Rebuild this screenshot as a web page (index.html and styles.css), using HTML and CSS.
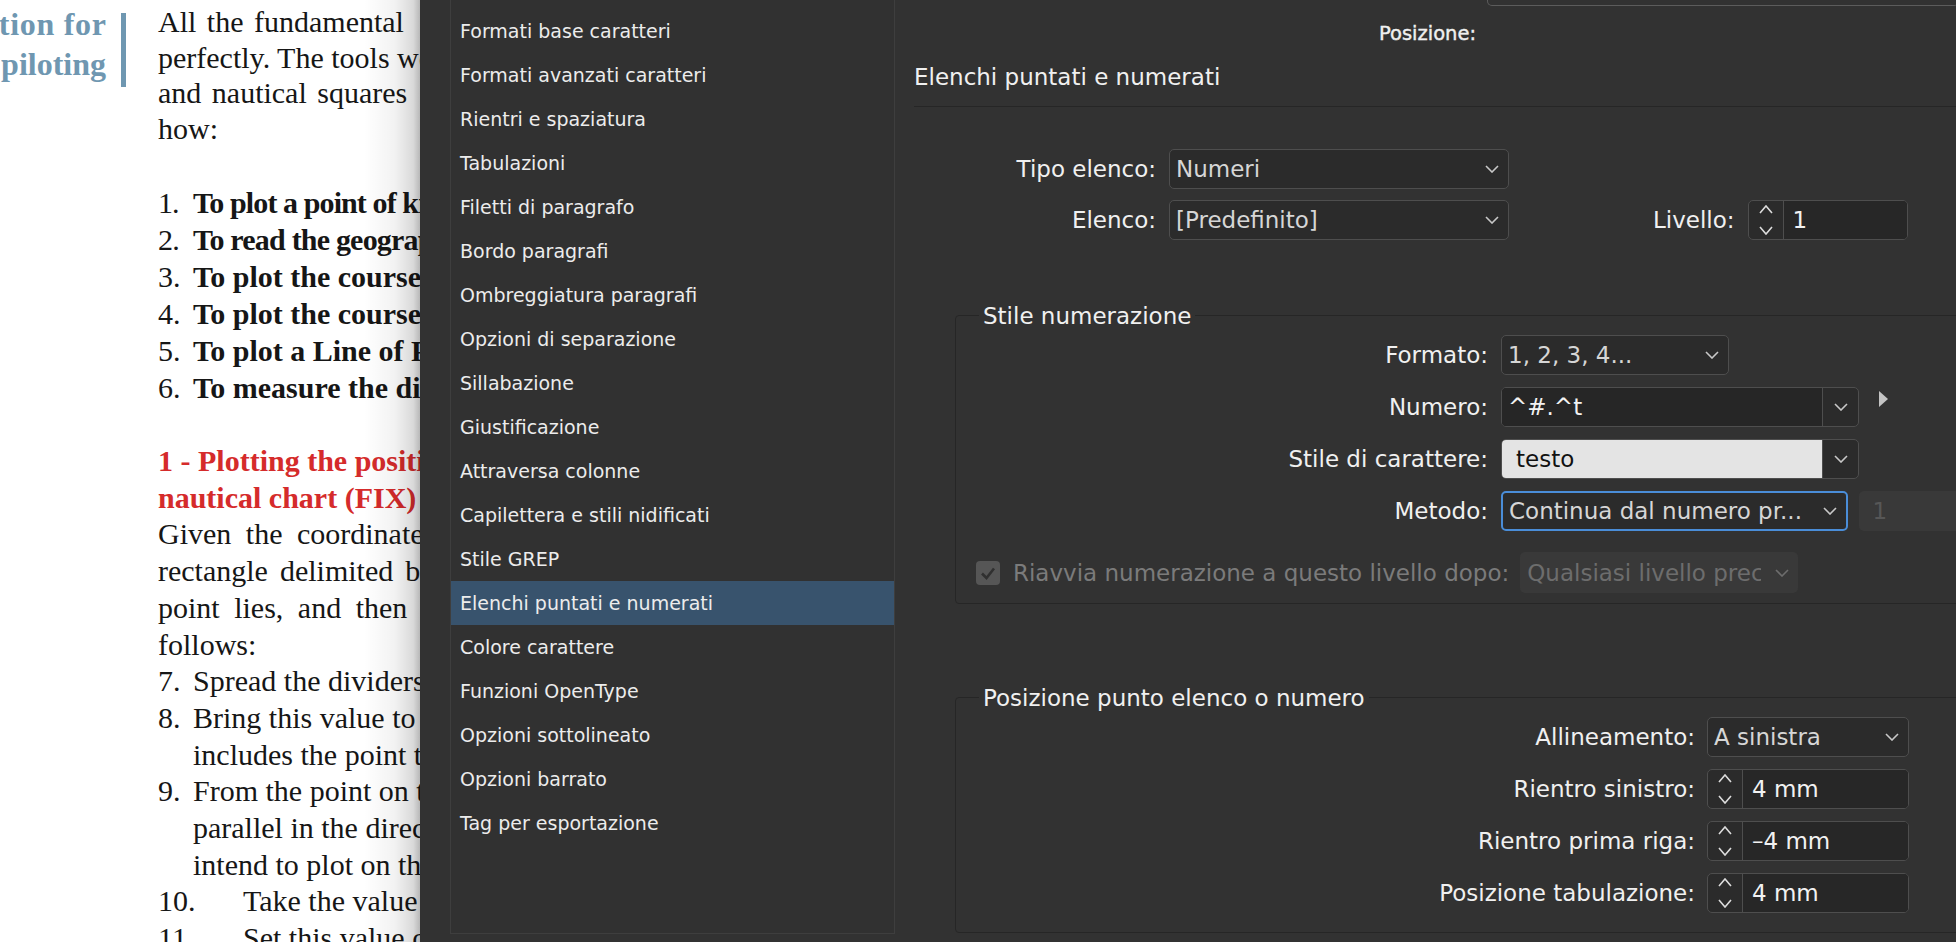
FILE: index.html
```html
<!DOCTYPE html>
<html lang="it">
<head>
    <meta charset="UTF-8">
    <title>Opzioni stile paragrafo - Elenchi puntati e numerati</title>
    <link rel="stylesheet" href="styles.css">
</head>
<body>
    <!-- Document page behind the dialog -->
    <div class="page">
        <div class="side-head">
            <div class="side-title">
                <span class="spread">Instrumentation for</span>
                <span>coastal piloting</span>
            </div>
            <div class="side-bar"></div>
        </div>

        <div class="page-text">
            <div class="para">
                <div class="just">All the fundamental</div>
                <div>perfectly. The tools we will use are the dividers</div>
                <div class="just">and nautical squares</div>
                <div>how:</div>
            </div>

            <div class="items">
                <div class="item tight"><span class="num">1.</span>To plot a point of known coordinates;</div>
                <div class="item tight2"><span class="num">2.</span>To read the geographic coordinates;</div>
                <div class="item"><span class="num">3.</span>To plot the course between two points;</div>
                <div class="item"><span class="num">4.</span>To plot the course to be steered;</div>
                <div class="item"><span class="num">5.</span>To plot a Line of Position (LOP);</div>
                <div class="item"><span class="num">6.</span>To measure the distance between points.</div>
            </div>

            <div class="section">
                <div class="red">1 - Plotting the position of a point on the</div>
                <div class="red">nautical chart (FIX)</div>
                <div class="wide">Given the coordinates of a point, first find</div>
                <div class="mid">rectangle delimited by the meridians and</div>
                <div class="wide">point lies, and then proceed as</div>
                <div>follows:</div>
                <div class="item-r"><span class="num">7.</span>Spread the dividers between the</div>
                <div class="item-r"><span class="num">8.</span>Bring this value to the latitude scale</div>
                <div class="item-r"><span class="num"></span>includes the point to be plotted;</div>
                <div class="item-r"><span class="num">9.</span>From the point on the scale draw a</div>
                <div class="item-r"><span class="num"></span>parallel in the direction of the point</div>
                <div class="item-r"><span class="num"></span>intend to plot on the chart;</div>
                <div class="item-r"><span class="num num-tab">10.</span>Take the value of longitude</div>
                <div class="item-r"><span class="num num-tab">11.</span>Set this value on the scale</div>
            </div>
        </div>

        <div class="page-shadow"></div>
    </div>

    <!-- Paragraph style options dialog -->
    <div class="dialog">
        <ul class="cat-list">
            <li>Formati base caratteri</li>
            <li>Formati avanzati caratteri</li>
            <li>Rientri e spaziatura</li>
            <li>Tabulazioni</li>
            <li>Filetti di paragrafo</li>
            <li>Bordo paragrafi</li>
            <li>Ombreggiatura paragrafi</li>
            <li>Opzioni di separazione</li>
            <li>Sillabazione</li>
            <li>Giustificazione</li>
            <li>Attraversa colonne</li>
            <li>Capilettera e stili nidificati</li>
            <li>Stile GREP</li>
            <li class="selected">Elenchi puntati e numerati</li>
            <li>Colore carattere</li>
            <li>Funzioni OpenType</li>
            <li>Opzioni sottolineato</li>
            <li>Opzioni barrato</li>
            <li>Tag per esportazione</li>
        </ul>

        <div class="pane">
            <div class="top-box"></div>
            <div class="pos-label">Posizione:</div>

            <div class="pane-title">Elenchi puntati e numerati</div>

            <div class="row row-first">
                <span class="label label-top">Tipo elenco:</span>
                <div class="select select-top">
                    <span class="val">Numeri</span>
                    <svg class="chev" width="14" height="8" viewBox="0 0 14 8"><polyline points="1,1 7,7 13,1"/></svg>
                </div>
            </div>

            <div class="row row-next">
                <span class="label label-top">Elenco:</span>
                <div class="select select-top">
                    <span class="val">[Predefinito]</span>
                    <svg class="chev" width="14" height="8" viewBox="0 0 14 8"><polyline points="1,1 7,7 13,1"/></svg>
                </div>
                <span class="label level-label">Livello:</span>
                <div class="spin spin-level">
                    <div class="spin-arrows">
                        <svg width="14" height="40" viewBox="0 0 14 40"><polyline points="1,13 7,6 13,13"/><polyline points="1,27 7,34 13,27"/></svg>
                    </div>
                    <span class="spin-val">1</span>
                </div>
            </div>

            <div class="group group-style">
                <div class="group-title">Stile numerazione</div>

                <div class="row row-g first">
                    <span class="label label-g">Formato:</span>
                    <div class="select select-format">
                        <span class="val">1, 2, 3, 4...</span>
                        <svg class="chev" width="14" height="8" viewBox="0 0 14 8"><polyline points="1,1 7,7 13,1"/></svg>
                    </div>
                </div>

                <div class="row row-g">
                    <span class="label label-g">Numero:</span>
                    <div class="combo">
                        <span class="combo-text">^#.^t</span>
                        <span class="combo-btn"><svg class="chev" width="14" height="8" viewBox="0 0 14 8"><polyline points="1,1 7,7 13,1"/></svg></span>
                    </div>
                    <svg class="flyout" width="9" height="16" viewBox="0 0 9 16"><polygon points="0,0 9,8 0,16"/></svg>
                </div>

                <div class="row row-g">
                    <span class="label label-g">Stile di carattere:</span>
                    <div class="combo">
                        <span class="combo-text light">testo</span>
                        <span class="combo-btn"><svg class="chev" width="14" height="8" viewBox="0 0 14 8"><polyline points="1,1 7,7 13,1"/></svg></span>
                    </div>
                </div>

                <div class="row row-g">
                    <span class="label label-g">Metodo:</span>
                    <div class="select select-method">
                        <span class="val">Continua dal numero pr...</span>
                        <svg class="chev" width="14" height="8" viewBox="0 0 14 8"><polyline points="1,1 7,7 13,1"/></svg>
                    </div>
                    <div class="field-off">1</div>
                </div>

                <div class="row row-check">
                    <span class="checkbox">
                        <svg width="24" height="24" viewBox="0 0 24 24"><polyline points="6,12.5 10.5,17 18,7.5"/></svg>
                    </span>
                    <span class="check-label">Riavvia numerazione a questo livello dopo:</span>
                    <div class="select select-off">
                        <span class="val">Qualsiasi livello precedente</span>
                        <svg class="chev" width="14" height="8" viewBox="0 0 14 8"><polyline points="1,1 7,7 13,1"/></svg>
                    </div>
                </div>
            </div>

            <div class="group group-pos">
                <div class="group-title">Posizione punto elenco o numero</div>

                <div class="row row-g first">
                    <span class="label label-p">Allineamento:</span>
                    <div class="select select-pos">
                        <span class="val">A sinistra</span>
                        <svg class="chev" width="14" height="8" viewBox="0 0 14 8"><polyline points="1,1 7,7 13,1"/></svg>
                    </div>
                </div>

                <div class="row row-g">
                    <span class="label label-p">Rientro sinistro:</span>
                    <div class="spin spin-pos">
                        <div class="spin-arrows">
                            <svg width="14" height="40" viewBox="0 0 14 40"><polyline points="1,13 7,6 13,13"/><polyline points="1,27 7,34 13,27"/></svg>
                        </div>
                        <span class="spin-val">4 mm</span>
                    </div>
                </div>

                <div class="row row-g">
                    <span class="label label-p">Rientro prima riga:</span>
                    <div class="spin spin-pos">
                        <div class="spin-arrows">
                            <svg width="14" height="40" viewBox="0 0 14 40"><polyline points="1,13 7,6 13,13"/><polyline points="1,27 7,34 13,27"/></svg>
                        </div>
                        <span class="spin-val">–4 mm</span>
                    </div>
                </div>

                <div class="row row-g">
                    <span class="label label-p">Posizione tabulazione:</span>
                    <div class="spin spin-pos">
                        <div class="spin-arrows">
                            <svg width="14" height="40" viewBox="0 0 14 40"><polyline points="1,13 7,6 13,13"/><polyline points="1,27 7,34 13,27"/></svg>
                        </div>
                        <span class="spin-val">4 mm</span>
                    </div>
                </div>
            </div>
        </div>
    </div>
</body>
</html>
```

FILE: styles.css
```css
/* General styles */
body {
    margin: 0;
    height: 942px;
    display: flex;
    overflow: hidden;
    background: #323232;
}

/* Document page */
.page {
    width: 420px;
    height: 942px;
    flex-shrink: 0;
    position: relative;
    display: flex;
    overflow: hidden;
    background: #fff;
    font-family: "Liberation Serif", serif;
    color: #161616;
}

.side-head {
    width: 127px;
    flex-shrink: 0;
    display: flex;
}

.side-title {
    width: 106px;
    padding-top: 4px;
    display: flex;
    flex-direction: column;
    align-items: flex-end;
    font-size: 32px;
    line-height: 40px;
    font-weight: bold;
    color: #6f97b1;
    white-space: nowrap;
}

.side-title .spread {
    letter-spacing: 0.7px;
    margin-right: -0.7px;
}

.side-bar {
    width: 5px;
    height: 74px;
    margin: 13px 0 0 15px;
    background: #6f97b1;
}

.page-text {
    margin-left: 31px;
    padding-top: 4px;
    font-size: 30px;
    white-space: nowrap;
}

.para {
    line-height: 35.5px;
}

.just {
    word-spacing: 3px;
}

.items {
    margin-top: 38px;
    line-height: 37px;
    font-weight: bold;
}

.item,
.item-r {
    display: flex;
}

.num {
    width: 35px;
    flex-shrink: 0;
    font-weight: normal;
}

.num-tab {
    width: 85px;
}

.tight {
    letter-spacing: -0.9px;
}

.tight2 {
    letter-spacing: -0.8px;
}

.section {
    margin-top: 37px;
    line-height: 36.7px;
}

.red {
    color: #d52b2b;
    font-weight: bold;
}

.wide {
    word-spacing: 7px;
}

.mid {
    word-spacing: 4.5px;
}

.page-shadow {
    position: absolute;
    top: 0;
    right: 0;
    bottom: 0;
    width: 56px;
    background: linear-gradient(to right, rgba(0, 0, 0, 0) 0%, rgba(0, 0, 0, 0.05) 55%, rgba(0, 0, 0, 0.15) 88%, rgba(0, 0, 0, 0.28) 100%);
}

/* Dialog */
.dialog {
    flex: 1;
    display: flex;
    padding-left: 30px;
    background: #323232;
    font-family: "DejaVu Sans", sans-serif;
    color: #f0f0f0;
    overflow: hidden;
}

.cat-list {
    box-sizing: border-box;
    width: 445px;
    height: 934px;
    flex-shrink: 0;
    margin: 0;
    padding: 9px 0 0;
    list-style: none;
    background: #313131;
    border: 1px solid #3e3e3e;
    border-top: none;
}

.cat-list li {
    height: 44px;
    line-height: 44px;
    padding-left: 9px;
    font-size: 19px;
    color: #ececec;
    white-space: nowrap;
}

.cat-list li.selected {
    background: #38536d;
}

.pane {
    flex: 1;
    min-width: 0;
    display: flex;
    flex-direction: column;
    padding-left: 19px;
}

.top-box {
    align-self: flex-end;
    width: 470px;
    height: 5px;
    margin-right: -3px;
    border: 1.5px solid #5c5c5c;
    border-top: none;
    border-radius: 0 0 5px 5px;
}

.pos-label {
    align-self: flex-end;
    margin: 16px 480px 0 0;
    font-size: 19.5px;
    line-height: 24px;
    -webkit-text-stroke: 0.4px #f0f0f0;
}

.pane-title {
    margin-top: 17px;
    padding-bottom: 15px;
    font-size: 23px;
    line-height: 28px;
    border-bottom: 1px solid #262626;
}

/* Rows and labels */
.row {
    display: flex;
    align-items: center;
    height: 40px;
    flex-shrink: 0;
}

.row-first {
    margin-top: 42px;
}

.row-next {
    margin-top: 11px;
}

.label {
    flex-shrink: 0;
    text-align: right;
    font-size: 23px;
    white-space: nowrap;
}

.label-top {
    width: 242px;
    margin-right: 13px;
}

.level-label {
    margin-left: 144px;
    margin-right: 13px;
}

.label-g {
    width: 532px;
    margin-right: 13px;
}

.label-p {
    width: 739px;
    margin-right: 12px;
}

/* Dropdowns, combos and spinners */
.select {
    box-sizing: border-box;
    height: 40px;
    display: flex;
    align-items: center;
    padding: 0 9px 0 6px;
    border: 1.5px solid #4e4e4e;
    border-radius: 5px;
    background: #2b2b2b;
    font-size: 23px;
    color: #d6d6d6;
    overflow: hidden;
}

.select .val {
    flex: 1;
    overflow: hidden;
    white-space: nowrap;
}

.chev {
    flex-shrink: 0;
}

.chev polyline {
    fill: none;
    stroke: #c8c8c8;
    stroke-width: 1.6;
}

.select-top {
    width: 340px;
}

.select-format {
    width: 228px;
}

.select-method {
    width: 358px;
    border: 2px solid #4a8dd8;
}

.select-pos {
    width: 202px;
}

.combo {
    box-sizing: border-box;
    width: 358px;
    height: 40px;
    display: flex;
    border: 1.5px solid #4e4e4e;
    border-radius: 5px;
    overflow: hidden;
    background: #2b2b2b;
}

.combo-text {
    flex: 1;
    display: flex;
    align-items: center;
    padding-left: 6px;
    background: #262626;
    font-size: 23px;
    color: #f2f2f2;
}

.combo-text.light {
    padding-left: 14px;
    background: #e4e4e4;
    color: #111;
}

.combo-btn {
    width: 35px;
    display: flex;
    align-items: center;
    justify-content: center;
    border-left: 1.5px solid #4e4e4e;
}

.flyout {
    margin: 0 0 16px 20px;
}

.flyout polygon {
    fill: #c4c4c4;
}

.field-off {
    box-sizing: border-box;
    width: 120px;
    height: 40px;
    margin-left: 11px;
    padding-left: 14px;
    line-height: 40px;
    border-radius: 5px;
    background: #393939;
    font-size: 23px;
    color: #575757;
}

.spin {
    box-sizing: border-box;
    height: 40px;
    display: flex;
    border: 1.5px solid #4e4e4e;
    border-radius: 5px;
    background: #2b2b2b;
    overflow: hidden;
}

.spin-arrows {
    width: 34px;
    display: flex;
    align-items: center;
    justify-content: center;
    border-right: 1.5px solid #4e4e4e;
}

.spin-arrows polyline {
    fill: none;
    stroke: #dcdcdc;
    stroke-width: 1.6;
}

.spin-val {
    flex: 1;
    display: flex;
    align-items: center;
    padding-left: 9px;
    background: #272727;
    font-size: 23px;
    color: #f2f2f2;
}

.spin-level {
    width: 160px;
}

.spin-pos {
    width: 202px;
}

/* Groups */
.group {
    display: flex;
    flex-direction: column;
    border: 1px solid #262626;
    border-radius: 4px;
    margin-right: -20px;
    margin-left: 41px;
}

.group-style {
    margin-top: 75px;
    padding-bottom: 10px;
}

.group-pos {
    margin-top: 93px;
    padding-bottom: 19px;
}

.group-title {
    width: fit-content;
    margin: -14px 0 0 23px;
    padding: 0 4px;
    line-height: 28px;
    font-size: 23px;
    background: #323232;
}

.row-g {
    margin-top: 12px;
}

.row-g.first {
    margin-top: 5px;
}

.row-check {
    margin-top: 21px;
    height: 41px;
    padding-left: 20px;
}

.checkbox {
    width: 24px;
    height: 24px;
    flex-shrink: 0;
    border-radius: 4px;
    background: #565656;
}

.checkbox polyline {
    fill: none;
    stroke: #303030;
    stroke-width: 2.6;
}

.check-label {
    margin-left: 13px;
    font-size: 23px;
    color: #7b7b7b;
    white-space: nowrap;
}

.select-off {
    width: 278px;
    height: 41px;
    margin-left: 11px;
    padding-left: 7px;
    border: none;
    background: #393939;
    color: #6d6d6d;
}

.select-off .val {
    margin-right: 14px;
}

.select-off .chev polyline {
    stroke: #6d6d6d;
}
```
